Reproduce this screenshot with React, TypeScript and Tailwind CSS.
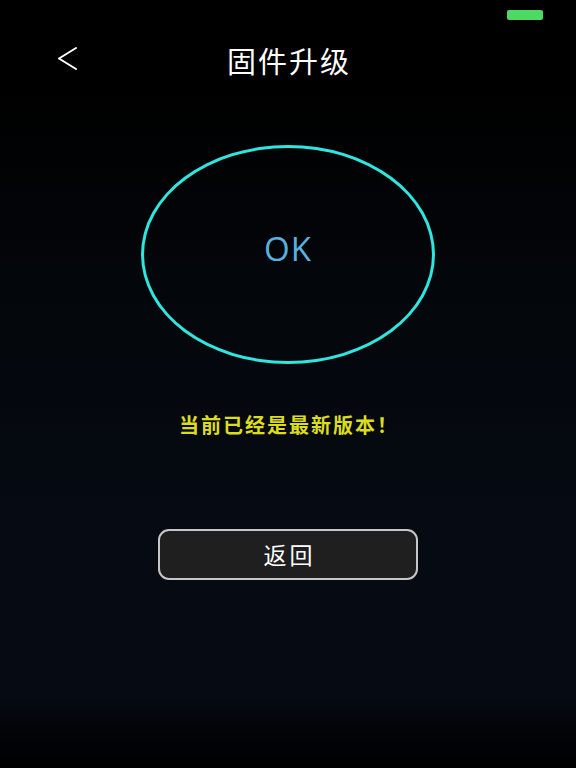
export default function App() {
  return (
    <div
      className="w-[576px] h-[768px] flex flex-col items-center bg-[linear-gradient(to_bottom,#000000_0%,#000000_12%,#03060a_35%,#060b13_70%,#060b13_91%,#02050a_94%,#000000_100%)] overflow-hidden"
      style={{ fontFamily: '"Noto Sans CJK SC", "Noto Sans", sans-serif' }}
    >
      {/* status bar */}
      <div className="w-full h-[30px] flex justify-end pt-[10px] pr-[33px]">
        <div className="w-[36px] h-[10px] rounded-[2px] bg-[#4cd964]" />
      </div>

      {/* nav bar */}
      <div className="w-full h-[58px] relative flex items-center justify-center">
        <svg
          className="absolute left-[56px] top-[16px]"
          width="23"
          height="25"
          viewBox="0 0 23 25"
          fill="none"
        >
          <path d="M20 2 L3 12.5 L20 23" stroke="#ffffff" strokeWidth="2" strokeLinecap="round" strokeLinejoin="round" />
        </svg>
        <span className="text-white text-[29px] leading-none tracking-[2px] pl-[2px] mt-[2px]">固件升级</span>
      </div>

      {/* status ring */}
      <div className="mt-[57px] w-[294px] h-[219px] rounded-[50%] border-[3px] border-[#2ee6df] flex items-center justify-center">
        <span
          className="text-[#5ab0e0] text-[33px] leading-none tracking-[1px] -mt-[12px]"
          style={{ fontFamily: '"Open Sans", "Noto Sans", sans-serif' }}
        >
          OK
        </span>
      </div>

      <p className="mt-[49px] text-[#dcdc1e] text-[20px] leading-[24px] font-bold tracking-[2px] pl-[2px]">
        当前已经是最新版本！
      </p>

      <button className="mt-[92px] w-[260px] h-[51px] rounded-[11px] border-2 border-[#c6c6c6] bg-[#1f1f1f] flex items-center justify-center">
        <span className="text-white text-[23px] leading-none tracking-[3px] pl-[3px]">返回</span>
      </button>
    </div>
  );
}
